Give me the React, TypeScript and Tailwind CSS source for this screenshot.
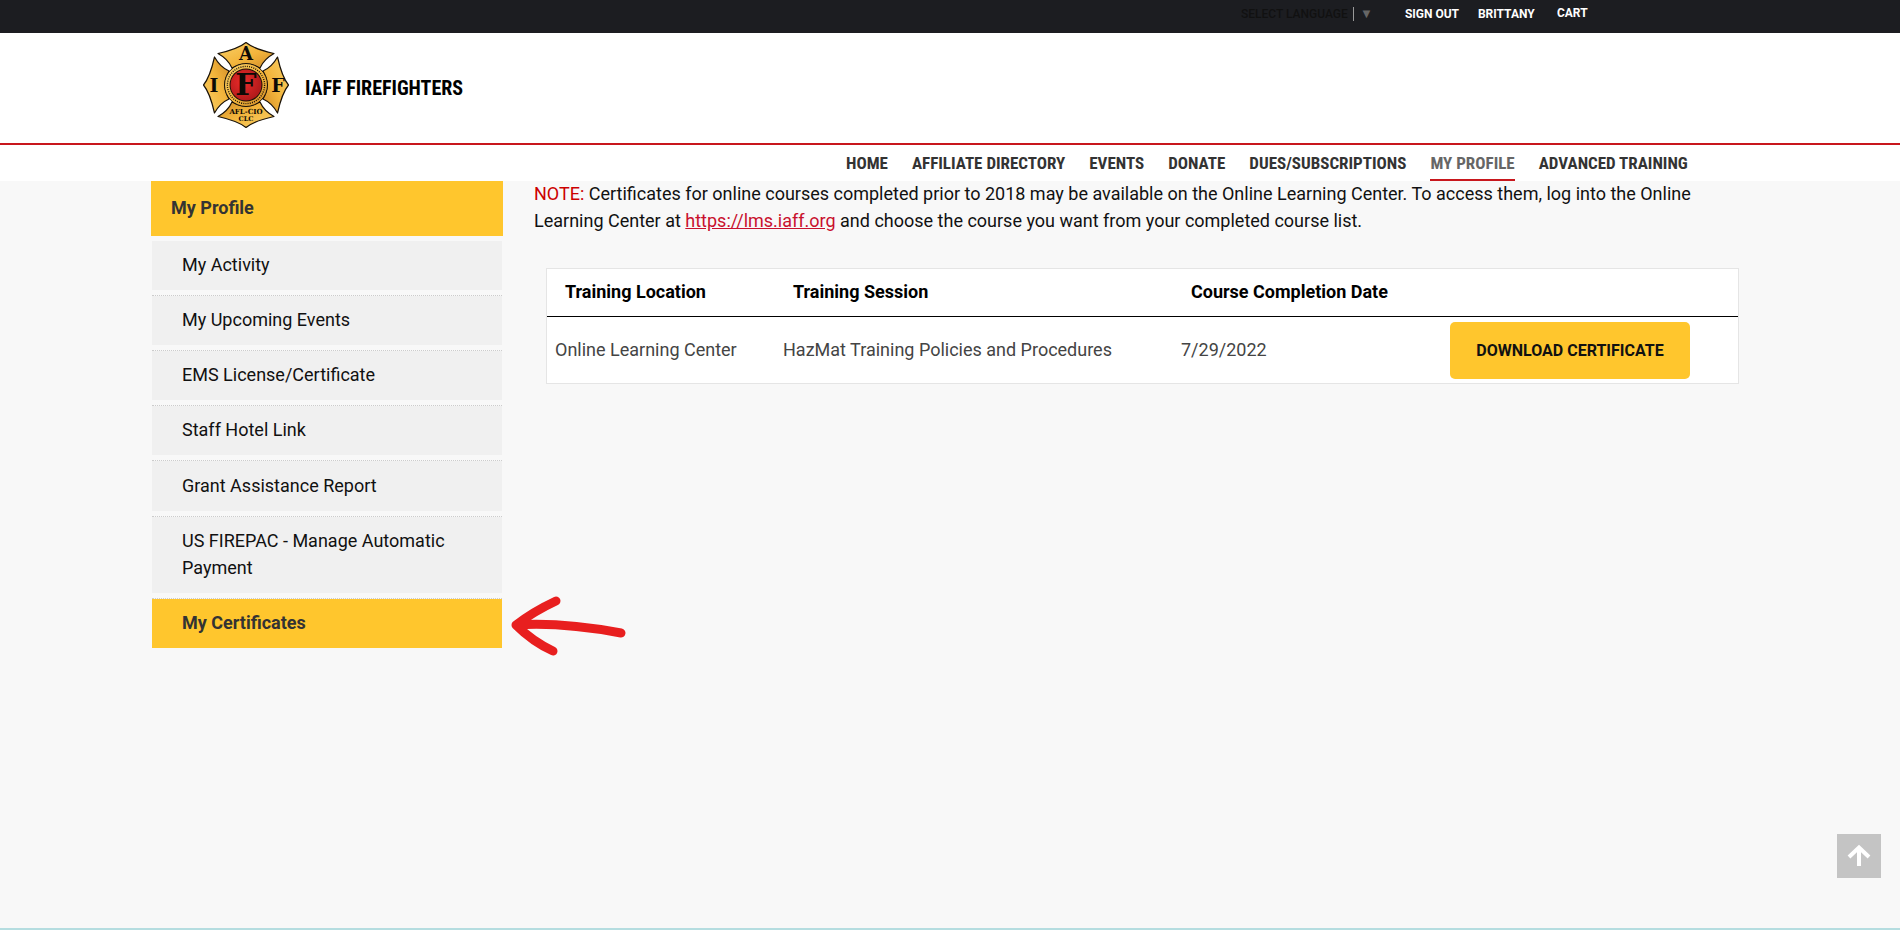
import React from "react";

const navItems = [
  "HOME",
  "AFFILIATE DIRECTORY",
  "EVENTS",
  "DONATE",
  "DUES/SUBSCRIPTIONS",
  "MY PROFILE",
  "ADVANCED TRAINING",
];

const sideItems = [
  "My Activity",
  "My Upcoming Events",
  "EMS License/Certificate",
  "Staff Hotel Link",
  "Grant Assistance Report",
  "US FIREPAC - Manage Automatic Payment",
];

function Logo() {
  const arm = "M43 0.5 Q35 7 15 11.5 Q25 17 29 26 Q43 18 57 26 Q61 17 71 11.5 Q51 7 43 0.5 Z";
  return (
    <svg width="86" height="86" viewBox="0 0 86 86" className="mb-[6px] block">
      <defs>
        <linearGradient id="gold" x1="0" y1="0" x2="1" y2="1">
          <stop offset="0" stopColor="#f9d169" />
          <stop offset="0.55" stopColor="#f3b53c" />
          <stop offset="1" stopColor="#d08a26" />
        </linearGradient>
        <radialGradient id="red" cx="0.4" cy="0.4" r="0.7">
          <stop offset="0" stopColor="#ec2b2b" />
          <stop offset="1" stopColor="#a91818" />
        </radialGradient>
      </defs>
      {[0, 90, 180, 270].map(r => (
        <path
          key={r}
          d={arm}
          transform={`rotate(${r} 43 43)`}
          fill="url(#gold)"
          stroke="#1a1208"
          strokeWidth="1.2"
          strokeLinejoin="round"
        />
      ))}
      <circle cx="43" cy="43" r="21.5" fill="url(#gold)" stroke="#1a1208" strokeWidth="1" />
      <circle cx="43" cy="43" r="18.6" fill="none" stroke="#1a1208" strokeWidth="1.4" strokeDasharray="1 1.2" />
      <circle cx="43" cy="43" r="16.5" fill="#1a1208" />
      <circle cx="43" cy="43" r="15.5" fill="url(#red)" />
      <g fontFamily="'DejaVu Serif', serif" fontWeight="700" fill="#0c0a06" textAnchor="middle">
        <text x="43" y="53" fontSize="30">F</text>
        <text x="43" y="17.5" fontSize="18">A</text>
        <text x="11" y="50" fontSize="19">I</text>
        <text x="75" y="50" fontSize="19">F</text>
        <text x="43" y="72" fontSize="7">AFL-CIO</text>
        <text x="43" y="79" fontSize="6.5">CLC</text>
      </g>
    </svg>
  );
}

export default function App() {
  return (
    <div className="relative flex h-[930px] w-[1900px] flex-col overflow-hidden bg-[#f8f8f8] font-['Roboto',sans-serif]">
      {/* top bar */}
      <div className="flex h-[33px] items-start bg-[#1c1d21] pl-[1241px] pt-[6px] text-[12px] font-bold leading-[16px] text-white">
        <span className="w-[107px] whitespace-nowrap font-medium text-[#111]">SELECT LANGUAGE</span>
        <span className="ml-[5px] mt-[1px] h-[14px] w-px bg-[#999]" />
        <span className="ml-[6px] mt-[1px] text-[13px] leading-[14px] text-[#666]">▼</span>
        <span className="ml-[32px] w-[54px] whitespace-nowrap">SIGN OUT</span>
        <span className="ml-[19px] w-[56px] whitespace-nowrap">BRITTANY</span>
        <span className="ml-[23px] -mt-[1px] whitespace-nowrap">CART</span>
      </div>

      {/* logo row */}
      <div className="flex h-[110px] items-center gap-[16px] bg-white pl-[203px]">
        <Logo />
        <span className="whitespace-nowrap font-['Roboto_Condensed',Roboto,sans-serif] text-[20px] font-bold text-black">
          IAFF FIREFIGHTERS
        </span>
      </div>

      {/* nav */}
      <div className="flex h-[38px] gap-6 border-t-2 border-[#c8171d] bg-white pl-[846px]">
        {navItems.map(n => (
          <a
            key={n}
            className={`whitespace-nowrap border-b-2 pt-[7px] font-['Roboto_Condensed',Roboto,sans-serif] text-[17px] font-bold leading-[22px] ${
              n === "MY PROFILE" ? "border-[#c8171d] text-[#666]" : "border-transparent text-[#333]"
            }`}
          >
            {n}
          </a>
        ))}
      </div>

      {/* body */}
      <div className="flex flex-1 pl-[151px]">
        <aside className="w-[352px]">
          <div className="flex h-[55px] items-center bg-[#ffc62d] pb-[2px] pl-[20px] text-[18px] font-bold text-[#333]">
            My Profile
          </div>
          <ul className="px-px">
            {sideItems.map((s, i) => (
              <li key={s} className={i === 0 ? "mt-[5px]" : "mt-[5px] border-t border-dotted border-[#ccc]"}>
                <a
                  className={`block bg-[#f0f0f0] pb-[12px] pl-[30px] pr-[30px] text-[18px] leading-[27px] text-[#111] ${
                    i === 4 ? "pt-[11px]" : "pt-[10px]"
                  }`}
                >
                  {s}
                </a>
              </li>
            ))}
            <li className="mt-[5px] border-t border-dotted border-[#ccc]">
              <a className="block bg-[#ffc62d] pb-[12px] pl-[30px] pt-[10px] text-[18px] font-bold leading-[27px] text-[#333]">
                My Certificates
              </a>
            </li>
          </ul>
        </aside>

        <main className="ml-[31px] w-[1206px]">
          <p className="-mt-[1px] text-[18px] leading-[27px] text-[#111]">
            <span className="text-[#c00]">NOTE:</span> Certificates for online courses completed prior to 2018 may be
            available on the Online Learning Center. To access them, log into the Online Learning Center at{" "}
            <a className="text-[#c8102e] underline">https://lms.iaff.org</a> and choose the course you want from your
            completed course list.
          </p>

          <div className="ml-[12px] mt-[34px] w-[1193px] border border-[#e5e5e5] bg-white">
            <div className="flex h-[48px] items-center border-b border-black pb-[2px] pl-[18px] text-[18px] font-bold text-black">
              <span className="w-[228px]">Training Location</span>
              <span className="w-[398px]">Training Session</span>
              <span>Course Completion Date</span>
            </div>
            <div className="flex h-[66px] items-center pl-[8px] text-[18px] text-[#444]">
              <span className="mb-[2px] w-[228px]">Online Learning Center</span>
              <span className="mb-[2px] w-[398px]">HazMat Training Policies and Procedures</span>
              <span className="mb-[2px] w-[269px]">7/29/2022</span>
              <button className="h-[57px] w-[240px] rounded-[5px] bg-[#ffc62d] pt-[1px] text-[16px] font-bold text-[#111]">
                DOWNLOAD CERTIFICATE
              </button>
            </div>
          </div>
        </main>
      </div>

      <div className="h-[2px] bg-[#b5dde0]" />

      {/* hand drawn annotation */}
      <svg width="130" height="66" viewBox="0 0 130 66" className="pointer-events-none absolute left-[505px] top-[594px]">
        <path
          d="M51 7 C36 14 20 24 11 31 C21 41 35 51 48 57 M11 31 C40 29 78 32 116 39"
          fill="none"
          stroke="#e81f1f"
          strokeWidth="9"
          strokeLinecap="round"
          strokeLinejoin="round"
        />
      </svg>

      {/* back to top */}
      <a className="absolute left-[1837px] top-[834px] flex h-[44px] w-[44px] items-center justify-center bg-[#c4c4c4]">
        <svg width="24" height="24" viewBox="0 0 24 24" fill="none" stroke="#fff" strokeWidth="4">
          <path d="M12 22 V4 M2 13 L12 3.5 L22 13" />
        </svg>
      </a>
    </div>
  );
}
